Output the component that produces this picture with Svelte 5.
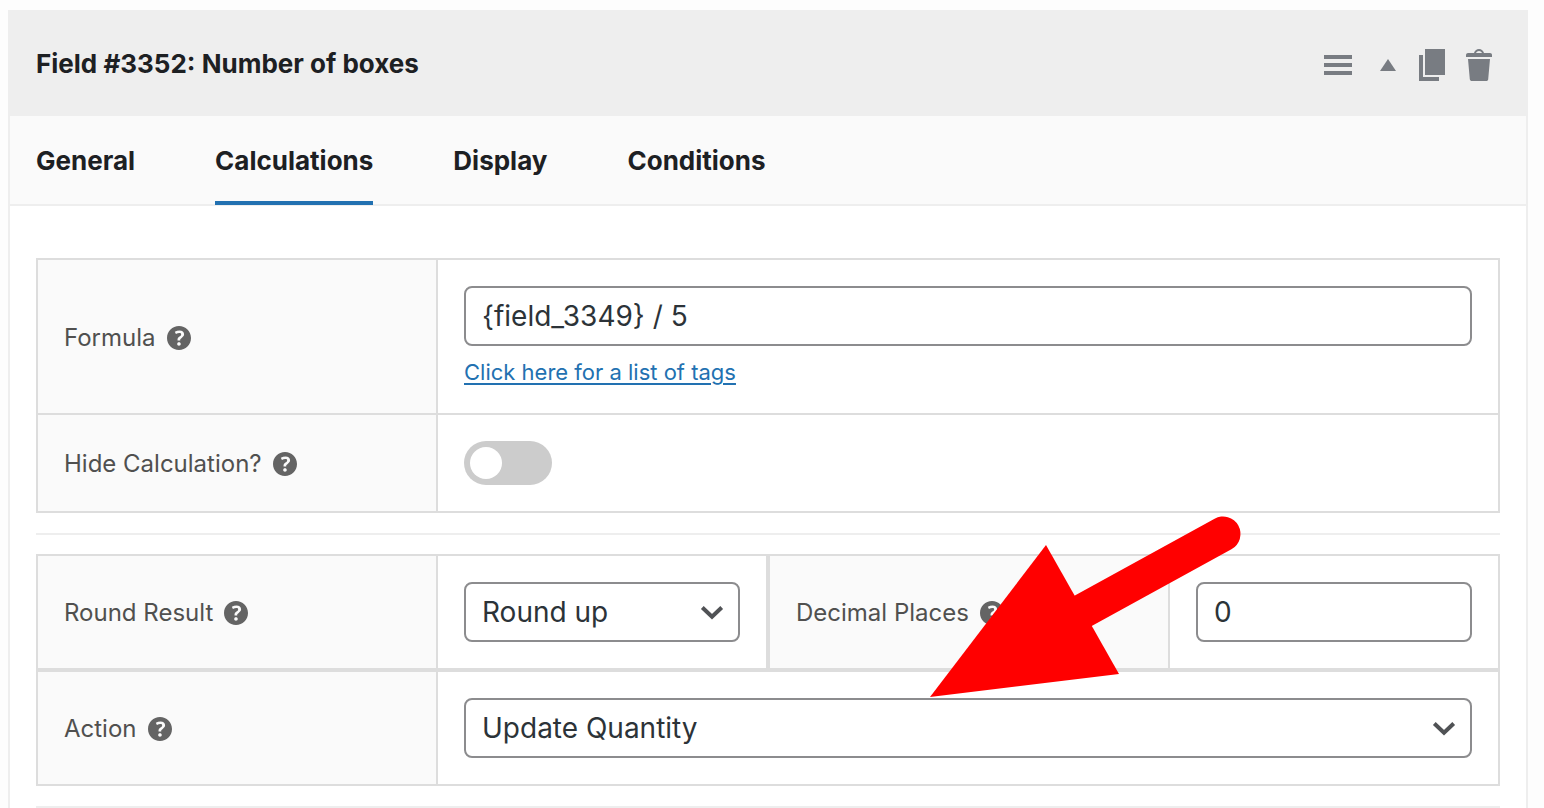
<script>
  const tabs = ['General', 'Calculations', 'Display', 'Conditions'];
  let active = $state('Calculations');
  let formula = $state('{field_3349} / 5');
  let hidden = $state(false);
  let rounding = $state('Round up');
  let decimals = $state('0');
  let action = $state('Update Quantity');
</script>

{#snippet help(topic)}
  <button type="button" class="help" aria-label={`Help: ${topic}`}>
    <svg viewBox="3 3 14 14" aria-hidden="true">
      <path d="M17 10c0-3.87-3.14-7-7-7-3.87 0-7 3.13-7 7s3.13 7 7 7c3.86 0 7-3.13 7-7zm-6.3 1.48H9.14v-.43c0-.38.08-.7.24-.98s.46-.57.88-.89c.41-.29.68-.53.81-.71.14-.18.2-.39.2-.62 0-.25-.09-.44-.28-.58-.19-.13-.45-.19-.79-.19-.58 0-1.25.19-2 .57l-.64-1.28c.87-.49 1.8-.74 2.77-.74.81 0 1.45.2 1.92.58.48.39.71.91.71 1.55 0 .43-.09.8-.29 1.11-.19.32-.57.67-1.11 1.06-.38.28-.61.49-.71.63-.1.15-.15.34-.15.57v.35zm-1.47 2.74c-.18-.17-.27-.42-.27-.73 0-.33.08-.58.26-.75s.43-.25.77-.25c.32 0 .57.09.75.26s.27.42.27.74c0 .3-.09.55-.27.72-.18.18-.43.27-.75.27-.33 0-.58-.09-.76-.26z" />
    </svg>
  </button>
{/snippet}

{#snippet chevron()}
  <svg class="chevron" viewBox="0 0 24 16" aria-hidden="true">
    <path d="M2.300 3.500 12 12.700 21.700 3.500" />
  </svg>
{/snippet}

<main class="panel">
  <header class="head">
    <h1>Field #3352: Number of boxes</h1>
    <div class="tools">
      <button type="button" aria-label="Reorder">
        <svg viewBox="0 0 40 40"><path d="M5 10h28v4H5zM5 18h28v4H5zM5 26h28v4H5z" /></svg>
      </button>
      <button type="button" aria-label="Collapse">
        <svg viewBox="0 0 40 40"><path d="M22 14l8 12H14z" /></svg>
      </button>
      <button type="button" aria-label="Duplicate">
        <svg viewBox="0 0 20 20"><path d="M6 15V2h10v13H6zm-1 1h8v2H3V5h2v11z" /></svg>
      </button>
      <button type="button" aria-label="Delete">
        <svg viewBox="0 0 20 20"><path d="M12 4h3c.6 0 1 .4 1 1v1H3V5c0-.6.5-1 1-1h3c.2-1.100 1.300-2 2.500-2s2.300.9 2.500 2zM8 4h3c-.2-.6-.9-1-1.500-1S8.200 3.400 8 4zM4 7h11l-.9 10.100c0 .5-.5.9-1 .9H5.900c-.5 0-.9-.4-1-.9L4 7z" /></svg>
      </button>
    </div>
  </header>

  <nav class="tabs">
    {#each tabs as tab}
      <button type="button" class:active={tab === active} onclick={() => (active = tab)}>{tab}</button>
    {/each}
  </nav>

  <div class="body">
    <section class="group joined">
      <div class="field">
        <div class="label"><label for="formula">Formula</label>{@render help('Formula')}</div>
        <div class="value">
          <input id="formula" class="control" type="text" bind:value={formula} />
          <a href="#tags">Click here for a list of tags</a>
        </div>
      </div>
      <div class="field">
        <div class="label"><label for="hide">Hide Calculation?</label>{@render help('Hide Calculation')}</div>
        <div class="value"><input id="hide" class="switch" type="checkbox" bind:checked={hidden} /></div>
      </div>
    </section>

    <hr />

    <section class="group">
      <div class="pair">
        <div class="field">
          <div class="label"><label for="rounding">Round Result</label>{@render help('Round Result')}</div>
          <div class="value">
            <div class="select">
              <select id="rounding" class="control" bind:value={rounding}>
                <option>Round up</option>
                <option>Round down</option>
              </select>
              {@render chevron()}
            </div>
          </div>
        </div>
        <div class="field">
          <div class="label"><label for="decimals">Decimal Places</label>{@render help('Decimal Places')}</div>
          <div class="value"><input id="decimals" class="control" type="text" bind:value={decimals} /></div>
        </div>
      </div>
      <div class="field">
        <div class="label"><label for="action">Action</label>{@render help('Action')}</div>
        <div class="value">
          <div class="select">
            <select id="action" class="control" bind:value={action}>
              <option>Update Quantity</option>
              <option>Update Price</option>
            </select>
            {@render chevron()}
          </div>
        </div>
      </div>

      <!-- Arrow that points at the action drop-down -->
      <svg class="pointer" viewBox="0 0 310 181" aria-hidden="true">
        <path class="shaft" d="M150 96 292 18" />
        <path d="M-1 181 115 29 188 158z" />
      </svg>
    </section>

    <hr />
  </div>
</main>

<style>
  :global(body) {
    margin: 0;
    background: #fdfdfd;
    font-family: Inter, "Liberation Sans", sans-serif;
  }

  .panel {
    box-sizing: border-box;
    min-height: calc(100vh - 10px);
    margin: 10px 16px 0 8px;
    border: solid #eeeeee;
    border-width: 0 2px;
    background: #fff;
    color: #1d2023;
  }

  button {
    padding: 0;
    border: 0;
    background: none;
    color: inherit;
    font: inherit;
    cursor: pointer;
  }

  svg {
    display: block;
    fill: currentColor;
  }

  .head {
    display: flex;
    align-items: center;
    justify-content: space-between;
    padding: 33px 26px 31px;
    background: #eeeeee;
  }

  h1 {
    margin: 0;
    font-size: 26px;
    line-height: 36px;
    font-weight: 700;
  }

  .tools {
    display: flex;
    gap: 7px;
    padding-top: 2px;
    color: #787c82;
  }

  .tools svg {
    width: 40px;
    height: 40px;
  }

  .tabs {
    display: flex;
    gap: 80px;
    padding: 0 26px;
    border-bottom: 2px solid #eeeeee;
    background: #fafafa;
  }

  .tabs button {
    margin-bottom: -1px;
    padding: 27px 0 22px;
    border-bottom: 4px solid transparent;
    font-size: 26px;
    line-height: 36px;
    font-weight: 700;
  }

  .tabs .active {
    border-color: #2271b1;
  }

  .body {
    padding: 52px 26px 0;
  }

  hr {
    margin: 20px 0 19px;
    border: 0;
    border-top: 2px solid #eeeeee;
  }

  hr:last-child {
    margin-bottom: 0;
  }

  .group {
    position: relative;
  }

  .field {
    display: grid;
    grid-template-columns: 400px minmax(0, 1fr);
    border: 2px solid #dddddd;
  }

  .joined .field + .field {
    margin-top: -2px;
  }

  .pair {
    display: grid;
    grid-template-columns: 1fr 1fr;
  }

  .label {
    display: flex;
    align-items: center;
    gap: 11px;
    padding: 2px 26px 0;
    border-right: 2px solid #dddddd;
    background: #fafafa;
    color: #50504f;
    font-size: 24px;
    line-height: 32px;
  }

  .help {
    color: #646464;
  }

  .help svg {
    width: 24px;
    height: 24px;
  }

  .value {
    padding: 26px;
  }

  .control {
    box-sizing: border-box;
    display: block;
    width: 100%;
    height: 60px;
    margin: 0;
    padding: 0 16px;
    border: 2px solid #8c8c8e;
    border-radius: 8px;
    background: #fff;
    color: #2c3338;
    font-family: inherit;
    font-size: 28px;
    line-height: 36px;
    appearance: none;
  }

  .select {
    display: grid;
    align-items: center;
  }

  .select > :global(*) {
    grid-area: 1 / 1;
  }

  .chevron {
    justify-self: end;
    width: 24px;
    height: 16px;
    margin-right: 16px;
    fill: none;
    stroke: #505255;
    stroke-width: 4;
    pointer-events: none;
  }

  a {
    display: table;
    margin-top: 12px;
    color: #2271b1;
    font-size: 22px;
    line-height: 29px;
    text-decoration-thickness: 2px;
    text-underline-offset: 3px;
  }

  .switch {
    display: flex;
    align-items: center;
    box-sizing: border-box;
    width: 88px;
    height: 44px;
    margin: 0;
    padding: 6px;
    border-radius: 22px;
    background: #cccccc;
    appearance: none;
    cursor: pointer;
  }

  .switch::before {
    content: "";
    width: 32px;
    height: 32px;
    border-radius: 50%;
    background: #fff;
  }

  .switch:checked {
    justify-content: flex-end;
    background: #2271b1;
  }

  .pointer {
    position: absolute;
    top: -38px;
    left: calc(50% + 163px);
    width: 310px;
    height: 181px;
    overflow: visible;
    color: #ff0000;
    pointer-events: none;
  }

  .shaft {
    fill: none;
    stroke: currentColor;
    stroke-width: 35;
    stroke-linecap: round;
  }
</style>
